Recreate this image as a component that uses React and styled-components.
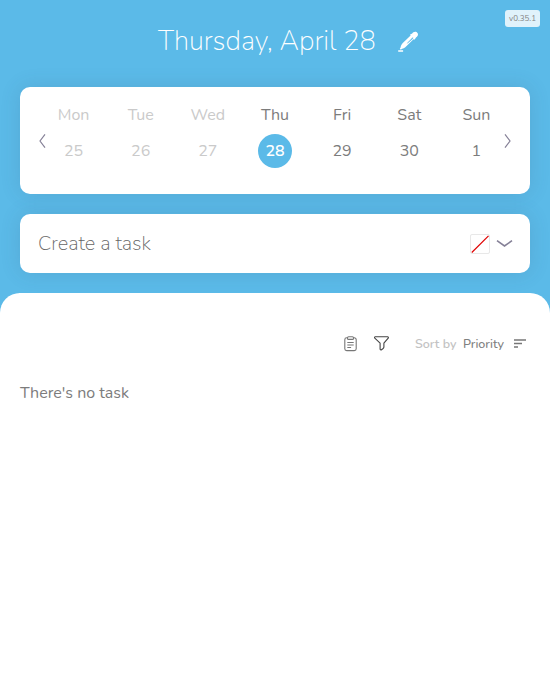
import React from "react";
import styled, { createGlobalStyle } from "styled-components";

const GlobalStyle = createGlobalStyle`
  * { box-sizing: border-box; }
  body { margin: 0; background: #5bbae8; font-family: "Nunito", "Noto Sans", sans-serif; color: #7c7c7c; }
  button { border: 0; padding: 0; background: none; font: inherit; color: inherit; }
  svg { display: block; }
`;

const Page = styled.div`
  position: relative;
  display: flex;
  flex-direction: column;
  height: 699px;
  overflow: hidden;
`;

const Version = styled.span`
  position: absolute;
  top: 10px;
  right: 10px;
  width: 35px;
  height: 17px;
  border-radius: 3px;
  background: #e0f2fb;
  color: #848484;
  font-size: 8px;
  line-height: 17px;
  text-align: center;
  white-space: nowrap;
`;

const Header = styled.header`
  display: flex;
  align-items: center;
  height: 87px;
  padding: 0 0 4px 158px;
`;

const Title = styled.h1`
  margin: 0;
  width: 240px;
  color: #fff;
  font-size: 27.2px;
  font-weight: 220;
  line-height: 38px;
  white-space: nowrap;
`;

const Card = styled.section`
  position: relative;
  flex: none;
  margin: 0 20px 20px;
  border-radius: 10px;
  background: #fff;
  box-shadow: 0 0 20px rgba(55, 80, 110, 0.16);
`;

const Week = styled(Card)`
  display: grid;
  grid-template-columns: repeat(7, 1fr);
  height: 107px;
  padding: 17px 20px 0;
`;

const Day = styled.div`
  display: flex;
  flex-direction: column;
  align-items: center;
  gap: 8px;
  color: ${(p) => (p.$past ? "#cacaca" : "#7c7c7c")};
  font-size: 16px;
  line-height: 22px;
`;

const DayNumber = styled.span`
  width: 34px;
  height: 34px;
  border-radius: 50%;
  line-height: 34px;
  text-align: center;
  background: ${(p) => (p.$selected ? "#5bbae8" : "transparent")};
  color: ${(p) => (p.$selected ? "#fff" : "inherit")};
  font-weight: ${(p) => (p.$selected ? 600 : 400)};
`;

const Arrow = styled.button`
  position: absolute;
  top: 46px;
  ${(p) => p.$side}: 18px;
`;

const TaskForm = styled(Card)`
  display: flex;
  align-items: center;
  height: 59px;
  padding: 0 17px 0 18px;
`;

const TaskInput = styled.input`
  flex: 1;
  min-width: 0;
  border: 0;
  padding: 0;
  outline: 0;
  font: 200 20px/28px "Nunito", "Noto Sans", sans-serif;
  &::placeholder { color: #666; opacity: 1; }
`;

const ColorButton = styled.button`
  width: 20px;
  height: 20px;
  margin-right: 6px;
  border: 1px solid #e8e8e8;
  border-radius: 2px;
`;

const Tasks = styled.main`
  flex: 1;
  border-radius: 20px 20px 0 0;
  background: #fff;
  padding: 38px 20px 0;
`;

const Toolbar = styled.div`
  display: flex;
  align-items: center;
  height: 26px;
  padding-left: 324px;
`;

const ToolButton = styled.button`
  margin: -1px ${(p) => p.$gap}px 0 0;
`;

const SortText = styled.span`
  width: ${(p) => p.$width}px;
  color: ${(p) => (p.$muted ? "#c3c3c3" : "#808080")};
  font-size: 12.5px;
  font-weight: ${(p) => (p.$muted ? 600 : 500)};
  line-height: 18px;
  white-space: nowrap;
`;

const SortBars = styled.svg`
  margin-top: -1px;
`;

const Empty = styled.p`
  margin: 24px 0 0;
  font-size: 16px;
  line-height: 24px;
`;

const days = [
  ["Mon", 25, true], ["Tue", 26, true], ["Wed", 27, true],
  ["Thu", 28, false], ["Fri", 29, false], ["Sat", 30, false], ["Sun", 1, false],
];

const Brush = () => (
  <svg width="21" height="21" viewBox="0 0 21 21" fill="none">
    <path d="M14.2 2.6c.8-1.5 2.8-2.3 4.6-1.3 1.7 1.2 1.5 3.3.1 4.4l-.9.8-.6 1-1.1 1.2-.8-.4-7.7 7.4c-1 1-2.2 1.8-3.7 2l-1.3 1-1-.9.8-1.4c.3-1.7 1-3.1 2.2-4.3l7.8-7.5-.5-.9 1-1 .6.4z" fill="#fff" />
    <path d="m14.7 6.6-5.4 5.7 5.4-4.6z" fill="#5bbae8" stroke="#5bbae8" strokeWidth=".5" />
    <path d="M.2 20h4.9" stroke="#fff" strokeWidth="1.5" />
  </svg>
);

const Chevron = ({ right }) => (
  <svg width="9" height="16" viewBox="0 0 9 16" fill="none" stroke="#858097" strokeWidth="1.2">
    <path d={right ? "m2 1.3 5 6.7-5 6.7" : "M7 1.3 2 8l5 6.7"} />
  </svg>
);

const ClipboardIcon = () => (
  <svg width="13" height="16" viewBox="0 0 13 16" fill="none" stroke="#777" strokeWidth="1.1">
    <path d="M3.5 1.8H2.7A1.9 1.9 0 0 0 .8 3.7v9a1.9 1.9 0 0 0 1.9 1.9h7.6a1.9 1.9 0 0 0 1.9-1.9v-9a1.9 1.9 0 0 0-1.9-1.9h-.8" />
    <rect x="3.5" y=".7" width="6" height="2.7" rx="1" />
    <path d="M3.3 6.5h6.4M3.3 9h6.4M3.3 11.5h3.8" />
  </svg>
);

const FilterIcon = () => (
  <svg width="16" height="15" viewBox="0 0 16 15" fill="none" stroke="#444" strokeWidth="1.1" strokeLinejoin="round">
    <path d="M2.3.8h12.3c.7 0 1 .8.6 1.4L10.9 7.2v3.9c0 .6-.3 1-.8 1.4l-1.6 1.2c-.7.5-1.4.1-1.4-.7V7.2L1.8 2.2C1.3 1.6 1.6.8 2.3.8z" />
  </svg>
);

export default function App() {
  return (
    <Page>
      <GlobalStyle />
      <Version>v0.35.1</Version>
      <Header>
        <Title>Thursday, April 28</Title>
        <Brush />
      </Header>
      <Week>
        {days.map(([name, number, past]) => (
          <Day key={name} $past={past}>
            <span>{name}</span>
            <DayNumber $selected={number === 28}>{number}</DayNumber>
          </Day>
        ))}
        <Arrow $side="left" aria-label="Previous week"><Chevron /></Arrow>
        <Arrow $side="right" aria-label="Next week"><Chevron right /></Arrow>
      </Week>
      <TaskForm>
        <TaskInput placeholder="Create a task" />
        <ColorButton aria-label="Task color">
          <svg width="18" height="18" stroke="#e00000" strokeWidth="1.2"><path d="M.8 17.5 17.5.8" /></svg>
        </ColorButton>
        <svg width="17" height="9" fill="none" stroke="#858097" strokeWidth="1.6"><path d="m1 1.7 7.5 5.3L16 1.7" /></svg>
      </TaskForm>
      <Tasks>
        <Toolbar>
          <ToolButton $gap={16} aria-label="Copy tasks"><ClipboardIcon /></ToolButton>
          <ToolButton $gap={26} aria-label="Filter tasks"><FilterIcon /></ToolButton>
          <SortText $muted $width={48}>Sort by</SortText>
          <SortText $width={51}>Priority</SortText>
          <SortBars width="13" height="9" stroke="#777" strokeWidth="1.4"><path d="M0 1h12M0 4.5h8M0 8h4" /></SortBars>
        </Toolbar>
        <Empty>There's no task</Empty>
      </Tasks>
    </Page>
  );
}
